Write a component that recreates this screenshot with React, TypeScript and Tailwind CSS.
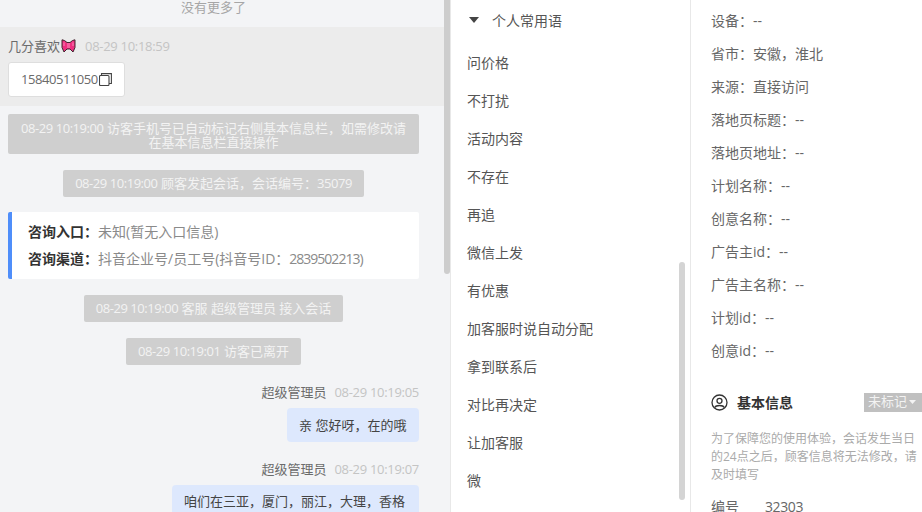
const font = { fontFamily: '"Open Sans", "Noto Sans CJK SC", sans-serif' };

const phrases = ["问价格", "不打扰", "活动内容", "不存在", "再追", "微信上发", "有优惠", "加客服时说自动分配", "拿到联系后", "对比再决定", "让加客服", "微"];

const infoRows = ["设备：--", "省市：安徽，淮北", "来源：直接访问", "落地页标题：--", "落地页地址：--", "计划名称：--", "创意名称：--", "广告主id：--", "广告主名称：--", "计划id：--", "创意id：--"];

function Bow() {
  return (
    <svg width="15" height="14" viewBox="0 0 15 14" className="ml-[1px] shrink-0">
      <path d="M1 0.800 L3.500 1.500 L6 3.500 H9 L11.500 1.500 L14 0.800 V8.500 L12 13 L9 10 H6 L3 13 L1 8.500 Z" fill="#ee2f80" stroke="#40262f" strokeWidth="1" />
      <rect x="6" y="4" width="3" height="5" fill="#f75f9f" />
      <path d="M3 3.500 V7 M12 3.500 V7" stroke="#f88ab8" strokeWidth="1" />
    </svg>
  );
}

function Num({ children }: { children: string }) {
  return <span className="tracking-[-0.45px]">{children}</span>;
}

function Time({ children }: { children: string }) {
  return <span className="tracking-[-0.3px] text-[#c4c4c4]">{children}</span>;
}

function SystemMsg({ time, text, num, top }: { time: string; text: string; num?: string; top: string }) {
  return (
    <div className={`flex justify-center ${top}`}>
      <div className="rounded-[2px] bg-[#cfcfcf] px-3 text-center text-[13px] leading-[27px] text-[#f3f3f3]">
        <Num>{time}</Num> {text}
        {num && <Num>{num}</Num>}
      </div>
    </div>
  );
}

export default function App() {
  return (
    <div className="flex h-[512px] w-[922px] overflow-hidden bg-white text-[14px]" style={font}>
      {/* 聊天记录 */}
      <div className="relative h-full w-[450px] shrink-0 overflow-hidden bg-[#f3f4f6] text-[13px]">
        <div className="h-[27px] w-[427px] pt-[1px] text-center leading-[13px] text-[#a6a6a6]">没有更多了</div>

        <div className="h-[79px] w-[444px] bg-[#ececec] pl-2 pt-[9px]">
          <div className="flex h-5 items-center leading-5">
            <span className="text-[#6b6b6b]">几分喜欢</span>
            <Bow />
            <span className="ml-[9px]"><Time>08-29 10:18:59</Time></span>
          </div>
          <div className="mt-[6px] flex h-[35px] w-[117px] items-center rounded-[3px] border border-[#dedede] bg-white pl-[12px] text-[#6b6b6b]">
            <span className="w-[78px] shrink-0 tracking-[-0.45px]">15840511050</span>
            <svg width="13" height="13" viewBox="0 0 13 13" fill="none" stroke="#444" strokeWidth="1.100" className="shrink-0">
              <rect x="0.500" y="2.500" width="9.500" height="10" rx="1" />
              <path d="M2.500 2.500 V0.600 H12.400 V10.500 H10" />
            </svg>
          </div>
        </div>

        <div className="ml-2 mt-2 w-[411px]">
          <div className="rounded-[2px] bg-[#cfcfcf] px-3 pt-[8px] pb-[5px] text-center text-[13px] leading-[13.500px] text-[#f3f3f3]">
            <Num>08-29 10:19:00</Num> 访客手机号已自动标记右侧基本信息栏，如需修改请在基本信息栏直接操作
          </div>
          <SystemMsg top="mt-4" time="08-29 10:19:00" text="顾客发起会话，会话编号：" num="35079" />

          <div className="mt-[15px] h-[67px] rounded-[2px] border-l-4 border-[#4f8efa] bg-white pl-4 pt-[6px] text-[14px] leading-[27px]">
            <div>
              <span className="font-bold text-[#333]">咨询入口：</span>
              <span className="text-[#8a8a8a]">未知(暂无入口信息)</span>
            </div>
            <div>
              <span className="font-bold text-[#333]">咨询渠道：</span>
              <span className="text-[#8a8a8a]">抖音企业号/员工号(抖音号ID：<span className="tracking-[-1px]">2839502213</span>)</span>
            </div>
          </div>

          <SystemMsg top="mt-4" time="08-29 10:19:00" text="客服 超级管理员 接入会话" />
          <SystemMsg top="mt-[16px]" time="08-29 10:19:01" text="访客已离开" />

          <div className="mt-[17px] flex h-5 items-center justify-end leading-5">
            <span className="text-[#6b6b6b]">超级管理员</span>
            <span className="ml-2"><Time>08-29 10:19:05</Time></span>
          </div>
          <div className="mt-[6px] flex justify-end">
            <div className="w-[132px] rounded-[4px] bg-[#dde8fd] py-[8px] pl-3 leading-[18px] text-[#444]">亲 您好呀，在的哦</div>
          </div>
          <div className="mt-[17px] flex h-5 items-center justify-end leading-5">
            <span className="text-[#6b6b6b]">超级管理员</span>
            <span className="ml-2"><Time>08-29 10:19:07</Time></span>
          </div>
          <div className="mt-[6px] flex justify-end">
            <div className="w-[247px] rounded-[4px] bg-[#dde8fd] px-3 py-[7px] leading-[18px] text-[#444]">咱们在三亚，厦门，丽江，大理，香格</div>
          </div>
        </div>

        <div className="absolute right-0 top-0 h-[274px] w-[6px] rounded-b-[3px] bg-[#cdcdcd]" />
      </div>

      {/* 常用语 */}
      <div className="relative h-full w-[241px] shrink-0 overflow-hidden border-x border-[#e8e8e8] bg-white pl-4">
        <div className="flex h-[40px] items-center text-[#555]">
          <svg width="10" height="6" viewBox="0 0 10 6" className="ml-[2px] mr-[13px]">
            <path d="M0 0 H10 L5 6 Z" fill="#444" />
          </svg>
          个人常用语
        </div>
        {phrases.map((p) => (
          <div key={p} className="h-[38px] leading-[46px] text-[#555]">{p}</div>
        ))}
        <div className="absolute right-[5px] top-[262px] h-[238px] w-[6px] rounded-[3px] bg-[#d4d4d4]" />
      </div>

      {/* 访客信息 */}
      <div className="h-full flex-1 overflow-hidden pl-5 text-[#666]">
        <div className="pt-[4px]">
          {infoRows.map((r) => (
            <div key={r} className="h-[33px] leading-[33px]">{r}</div>
          ))}
        </div>
        <div className="mt-[25px] flex h-5 items-center">
          <svg width="17" height="17" viewBox="0 0 17 17" fill="none" stroke="#333" strokeWidth="1.300" className="mr-[9px] shrink-0">
            <circle cx="8.500" cy="8.500" r="7.500" />
            <circle cx="8.500" cy="6.800" r="2.500" />
            <path d="M3.800 13.500 C5 10.800 12 10.800 13.200 13.500" />
          </svg>
          <span className="font-bold text-[#333]">基本信息</span>
          <div className="ml-auto flex h-[19px] w-[58px] shrink-0 items-center bg-[#c0c0c0] pl-1 text-[13px] text-[#f3f3f3]">
            未标记
            <svg width="7" height="4" viewBox="0 0 7 4" className="ml-[2px]"><path d="M0 0 H7 L3.500 4 Z" fill="#f3f3f3" /></svg>
          </div>
        </div>
        <div className="mt-[18px] w-[206px] text-[12px] leading-[18px] text-[#aaa]">
          为了保障您的使用体验，会话发生当日的24点之后，顾客信息将无法修改，请及时填写
        </div>
        <div className="mt-[14px] flex leading-[18px]">
          <span className="w-[54px]">编号</span>
          <span className="tracking-[-0.4px]">32303</span>
        </div>
      </div>
    </div>
  );
}
